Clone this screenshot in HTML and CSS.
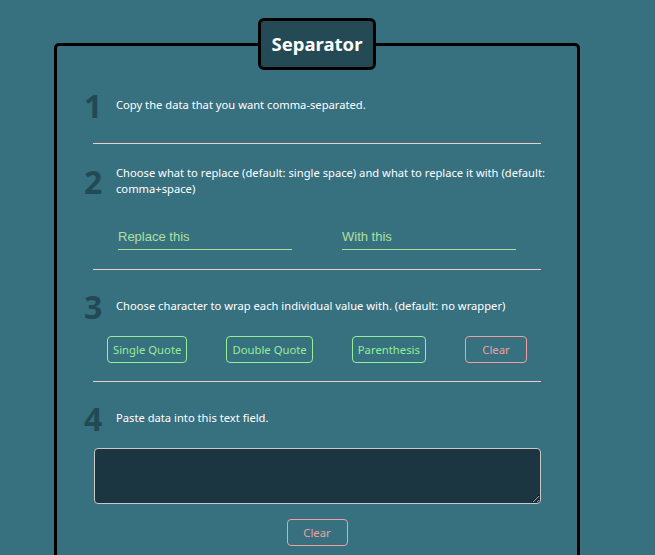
FILE: index.html
```html
<!DOCTYPE html>
<html>
<head>
<meta charset="utf-8">
<link rel="stylesheet" href="styles.css">
</head>
<body>
<div class="page">
  <section class="card">
    <h1 class="title">Separator</h1>
    <div class="step">
      <div class="num">1</div>
      <p class="desc">Copy the data that you want comma-separated.</p>
    </div>
    <hr class="divider">
    <div class="step">
      <div class="num">2</div>
      <p class="desc">Choose what to replace (default: single space) and what to replace it with (default: comma+space)</p>
    </div>
    <div class="inputs">
      <input class="field" type="text" placeholder="Replace this">
      <input class="field" type="text" placeholder="With this">
    </div>
    <hr class="divider divider-after-inputs">
    <div class="step">
      <div class="num">3</div>
      <p class="desc">Choose character to wrap each individual value with. (default: no wrapper)</p>
    </div>
    <div class="buttons">
      <button class="btn btn-green">Single Quote</button>
      <button class="btn btn-green">Double Quote</button>
      <button class="btn btn-green">Parenthesis</button>
      <button class="btn btn-red">Clear</button>
    </div>
    <hr class="divider divider-after-buttons">
    <div class="step">
      <div class="num">4</div>
      <p class="desc">Paste data into this text field.</p>
    </div>
    <textarea class="data"></textarea>
    <div class="bottom">
      <button class="btn btn-red btn-clear">Clear</button>
    </div>
  </section>
</div>
</body>
</html>
```
FILE: styles.css
```css
html, body {
  margin: 0;
  padding: 0;
  background: #37707f;
  font-family: "Noto Sans", "Open Sans", sans-serif;
  color: #ffffff;
}
.page {
  padding: 43px 0 0 54px;
  height: 512px;
  overflow: hidden;
}
.card {
  position: relative;
  width: 520px;
  min-height: 560px;
  border: 3px solid #000;
  border-radius: 5px;
  box-sizing: content-box;
  padding-top: 44px;
}
.title {
  position: absolute;
  top: -28px;
  left: 201px;
  margin: 0;
  width: 112px;
  height: 46px;
  box-sizing: content-box;
  background: #234a55;
  border: 3px solid #000;
  border-radius: 6px;
  font-size: 18.5px;
  font-weight: 700;
  line-height: 46px;
  text-align: center;
  color: #fff;
}
.step {
  display: flex;
  align-items: center;
  padding: 0 20px 0 27px;
}
.num {
  width: 32px;
  flex: none;
  font-size: 32px;
  font-weight: 700;
  line-height: 32px;
  color: #224a55;
}
.desc {
  margin: 0 0 2px;
  font-size: 11.2px;
  line-height: 16px;
}
.divider {
  margin: 21px 36px 21px 36px;
  border: 0;
  border-top: 1px solid #f3cac6;
  height: 0;
}
.divider-after-inputs {
  margin-top: 19px;
}
.divider-after-buttons {
  margin-top: 18px;
}
.inputs {
  display: flex;
  gap: 50px;
  padding: 27px 0 0 61px;
}
.field {
  width: 174px;
  height: 24px;
  box-sizing: border-box;
  background: transparent;
  border: 0;
  border-bottom: 1px solid #b3dc9c;
  font-family: "Liberation Sans", Arial, sans-serif;
  font-size: 13px;
  color: #b3e0a0;
  padding: 0 0 3px 0;
  outline: none;
}
.field::placeholder {
  color: #aee0a0;
}
.buttons {
  display: flex;
  justify-content: space-between;
  padding: 13px 50px 0 50px;
}
.btn {
  height: 27px;
  background: transparent;
  border: 1px solid;
  border-radius: 4px;
  font-family: "Noto Sans", "Open Sans", sans-serif;
  font-size: 11.3px;
  padding: 0 5px;
  cursor: pointer;
}
.btn-green {
  color: #93ef98;
  border-color: #93ef98;
}
.btn-red {
  color: #f0a0a0;
  border-color: #f0a0a0;
  width: 62px;
}
.data {
  display: block;
  margin: 13px 0 0 37px;
  width: 447px;
  height: 56px;
  box-sizing: border-box;
  background: #1b3640;
  border: 1px solid #c8c8c8;
  border-radius: 4px;
  color: #fff;
}
.bottom {
  display: flex;
  justify-content: center;
  padding-top: 15px;
}
.btn-clear {
  width: 61px;
}
```
